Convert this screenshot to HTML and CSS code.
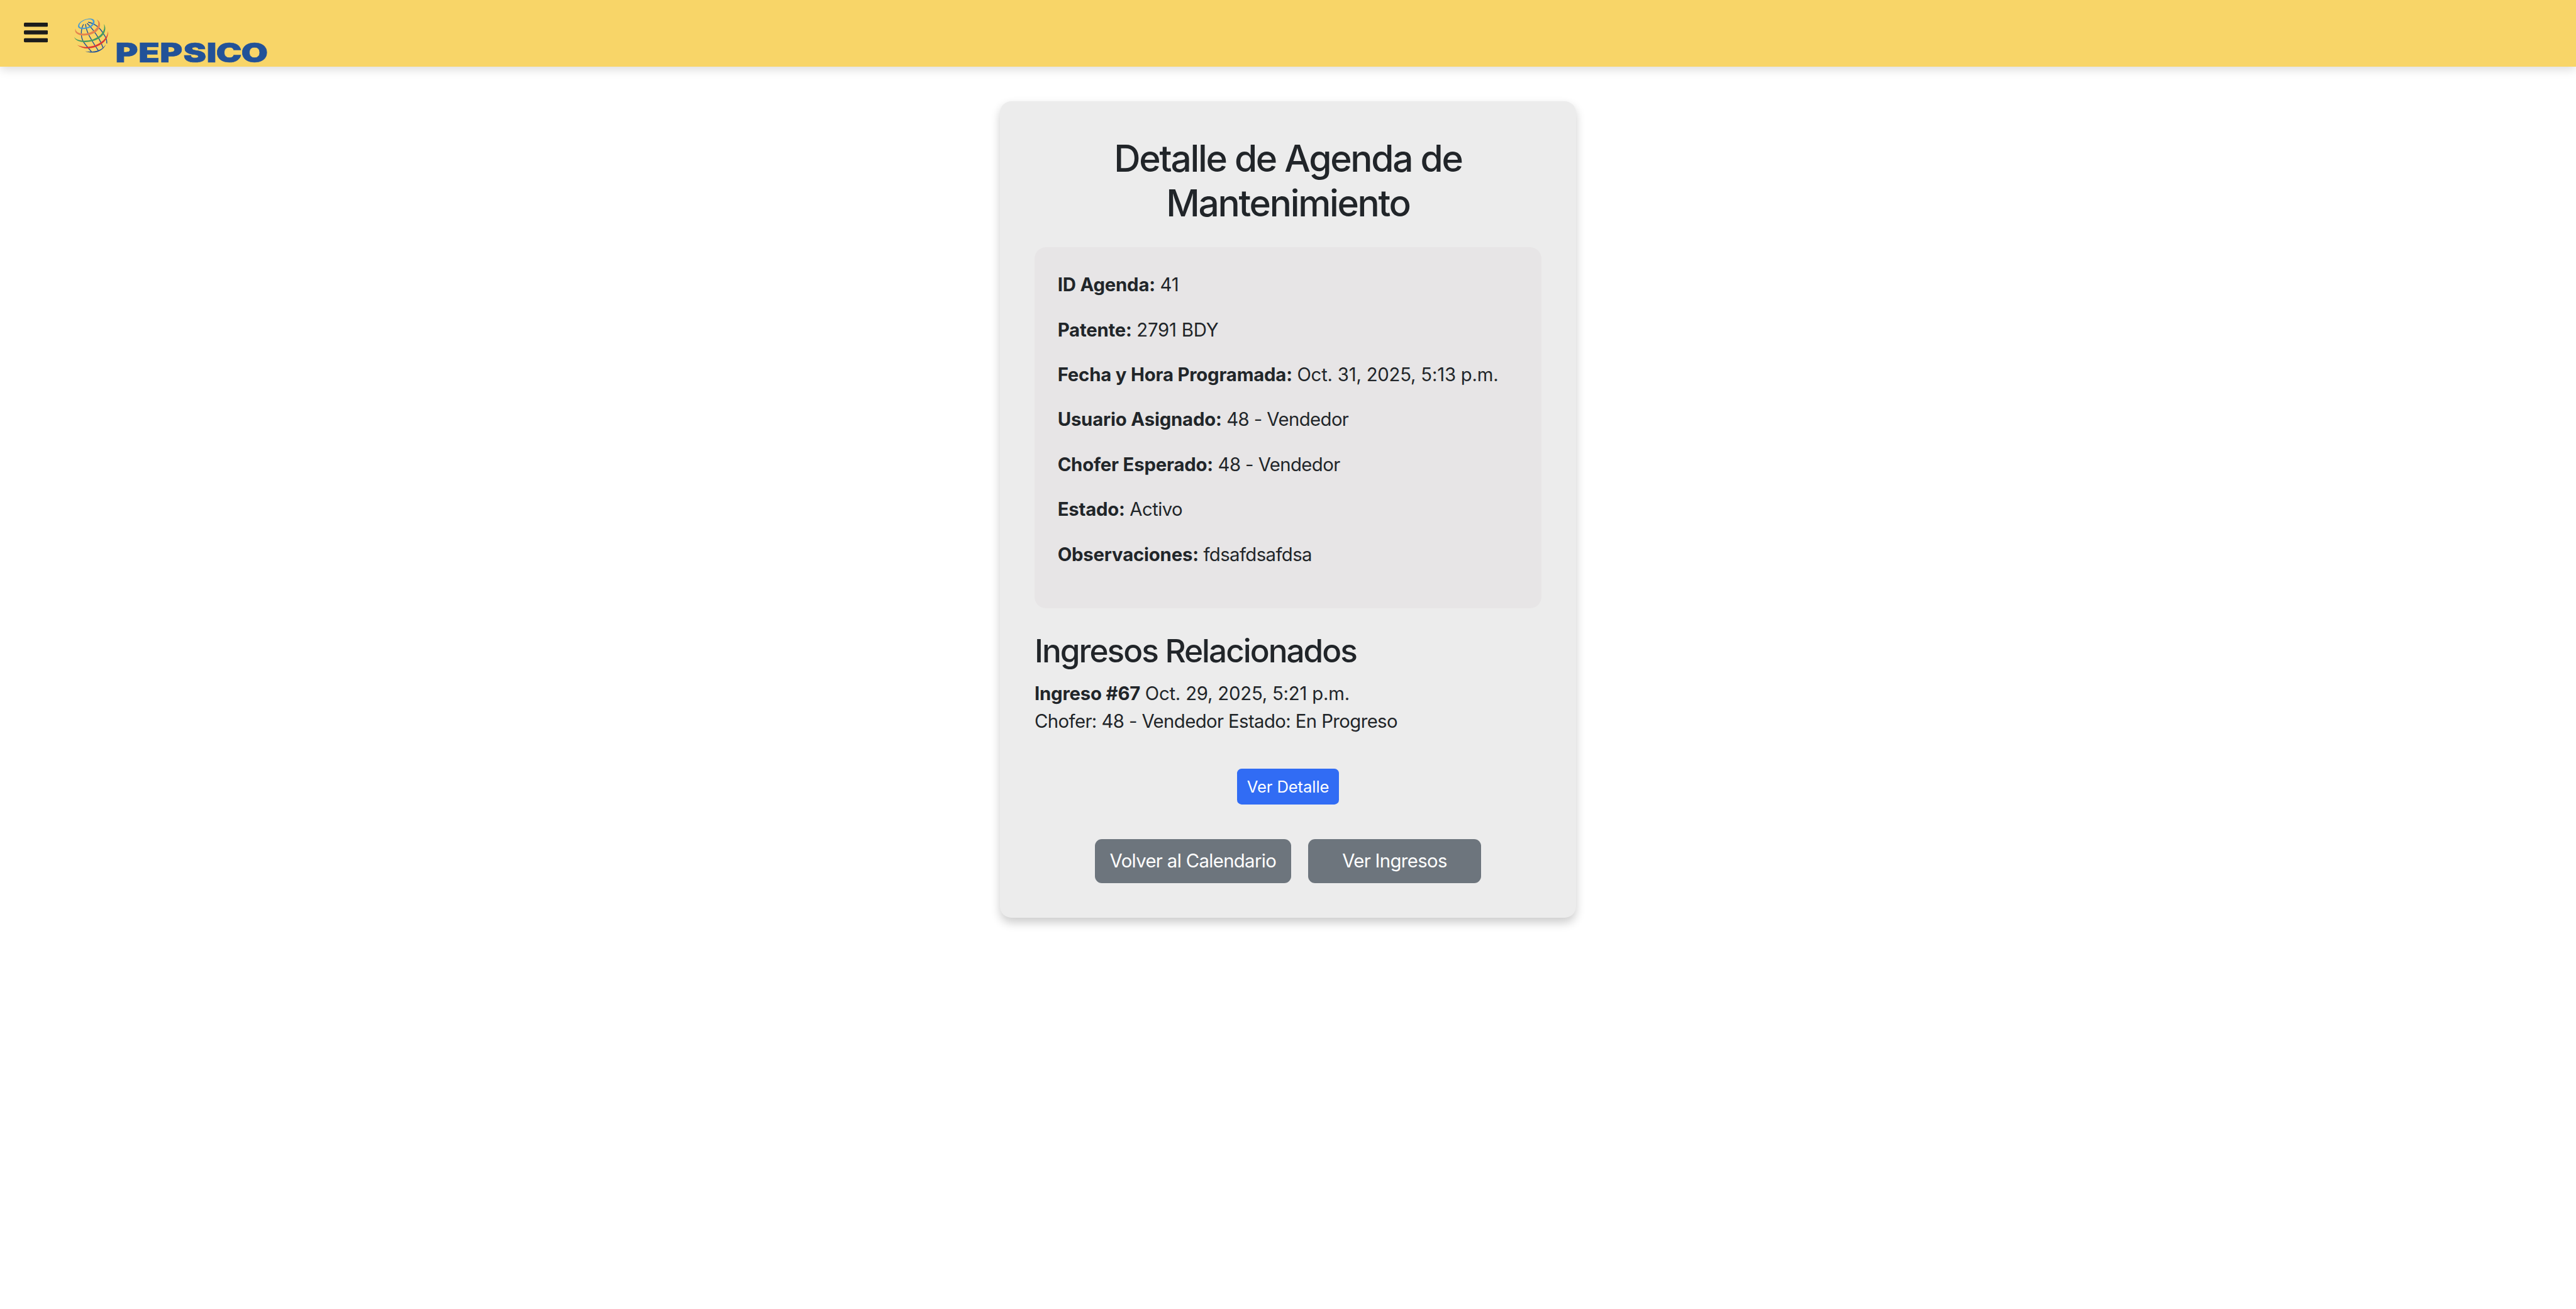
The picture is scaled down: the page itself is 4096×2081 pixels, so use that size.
FILE: index.html
```html
<!DOCTYPE html>
<html lang="es">
<head>
<meta charset="utf-8">
<title>Detalle de Agenda de Mantenimiento</title>
<link rel="stylesheet" href="styles.css">
</head>
<body>
<header class="navbar">
  <button class="menu-toggle" aria-label="Menú">
    <svg class="menu-icon" viewBox="0 0 42 35"><rect y="0" width="41.8" height="7" rx="1.8"/><rect y="13.4" width="41.8" height="7" rx="1.8"/><rect y="27" width="41.8" height="7" rx="1.8"/></svg>
  </button>
  <svg class="logo" viewBox="384 90 1016 246">
    <g class="meridians">
      <path d="M436 128C422 150 420 190 433 215C443 234 462 252 478 272"/>
      <path d="M446 127C448 155 462 185 480 213C490 232 502 248 512 264"/>
      <path d="M454 123C480 148 502 180 517 205C526 220 532 235 537 250"/>
      <path d="M460 117C495 124 525 150 543 183C556 200 558 212 557 228"/>
    </g>
    <path class="g-navy" d="M444 269C485 282 532 276 552 233C530 265 492 274 444 269Z"/>
    <path class="g-sky" fill-rule="evenodd" d="M408 143C402 117 448 95 478 99C500 103 496 126 480 139C458 155 416 158 408 143ZM415 140C422 151 454 148 472 135C487 124 490 108 474 103C448 97 408 120 415 140Z"/>
    <path class="g-orange" d="M394 150C382 184 430 194 474 181C522 166 538 120 504 103C522 122 512 154 471 170C436 183 394 178 394 150Z"/>
    <path class="g-green" d="M387 195C396 222 446 228 492 213C544 195 560 154 542 127C550 160 530 190 486 206C446 218 402 216 387 195Z"/>
    <path class="g-red" d="M402 235C428 256 462 260 502 245C548 226 566 198 564 163C560 196 540 218 500 236C462 250 430 250 402 235Z"/>
    <text class="wordmark" x="602" y="325" dx="0 2 1 3 1 -2 -3" textLength="794" lengthAdjust="spacingAndGlyphs">PEPSICO</text>
  </svg>
</header>
<main class="card">
  <h1 class="title">Detalle de Agenda de<br>Mantenimiento</h1>
  <section class="info">
    <p><strong>ID Agenda:</strong> <span class="num">41</span></p>
    <p><strong>Patente:</strong> <span class="num">2791 BDY</span></p>
    <p><strong>Fecha y Hora Programada:</strong> <span class="num">Oct. 31, 2025, 5:13 p.m.</span></p>
    <p><strong>Usuario Asignado:</strong> 48 - Vendedor</p>
    <p><strong>Chofer Esperado:</strong> 48 - Vendedor</p>
    <p><strong>Estado:</strong> Activo</p>
    <p><strong>Observaciones:</strong> fdsafdsafdsa</p>
  </section>
  <h2 class="subtitle">Ingresos Relacionados</h2>
  <div class="entry"><strong>Ingreso #67</strong> <span class="num">Oct. 29, 2025, 5:21 p.m.</span><br>Chofer: 48 - Vendedor Estado: En Progreso</div>
  <a class="btn btn-primary">Ver Detalle</a>
  <div class="actions">
    <a class="btn btn-secondary back">Volver al Calendario</a>
    <a class="btn btn-secondary entries">Ver Ingresos</a>
  </div>
</main>
</body>
</html>
```
FILE: styles.css
```css
/* 1rem = 10 layout pixels */
html { font-size: 18.3184px; }
* { box-sizing: border-box; }
body {
  margin: 0;
  min-height: 100vh;
  background: #fff;
  color: #212529;
  font-family: Inter, "Liberation Sans", sans-serif;
  font-size: 1.6rem;
  line-height: 1.5;
  letter-spacing: -0.02em;
}
strong { letter-spacing: -0.006em; }
.num { letter-spacing: -0.007em; }
.navbar {
  display: flex;
  align-items: flex-start;
  height: 5.8rem;
  padding-left: 2.05rem;
  background: #f8d568;
  box-shadow: 0 0.2rem 0.8rem rgba(0, 0, 0, 0.15);
}
.menu-toggle { padding: 0; border: 0; margin-top: 1.95rem; background: none; display: flex; }
.menu-icon { width: 2.1rem; height: 1.75rem; fill: #1c1c1c; }
.logo { width: 16.933rem; height: 4.1rem; margin: 1.5rem 0 0 2.25rem; overflow: visible; }
.meridians { fill: none; stroke: #20529a; stroke-width: 4.5; }
.g-navy { fill: #20529a; }
.g-sky { fill: #469bd6; }
.g-orange { fill: #e5844e; }
.g-green { fill: #459c5f; }
.g-red { fill: #dc3a32; }
.wordmark { font: 900 138px Inter, sans-serif; letter-spacing: 0; fill: #225298; stroke: #225298; stroke-width: 2; }
.card {
  width: 50rem;
  margin: 3rem auto 0;
  padding: 3rem;
  border-radius: 1rem;
  background: #ececec;
  box-shadow: 0 0.4rem 0.8rem rgba(0, 0, 0, 0.2);
}
.title { margin: 0 0 1.94rem; padding-top: 0.06rem; font-size: 3.2rem; font-weight: 500; line-height: 1.2; text-align: center; letter-spacing: -0.039em; }
.info { padding: 2rem; border-radius: 1rem; background: #e7e5e6; }
.info p { margin: 0 0 1.44rem; padding-top: 0.06rem; }
.subtitle { margin: 2rem 0 0.74rem; padding-top: 0.06rem; font-size: 2.8rem; font-weight: 500; line-height: 1.2; letter-spacing: -0.039em; }
.entry { padding-top: 0.06rem; }
.btn { display: flex; align-items: center; justify-content: center; color: #fff; white-space: nowrap; }
.btn-primary { width: 8.8rem; height: 3.1rem; margin: 2.94rem auto 3rem; border-radius: 0.4rem; background: #316cf4; font-size: 1.4rem; letter-spacing: -0.004em; }
.actions { display: flex; justify-content: center; gap: 1.5rem; }
.btn-secondary { height: 3.8rem; border-radius: 0.6rem; background: #6d757d; letter-spacing: -0.022em; }
.back { width: 17rem; }
.entries { width: 15rem; }
```
